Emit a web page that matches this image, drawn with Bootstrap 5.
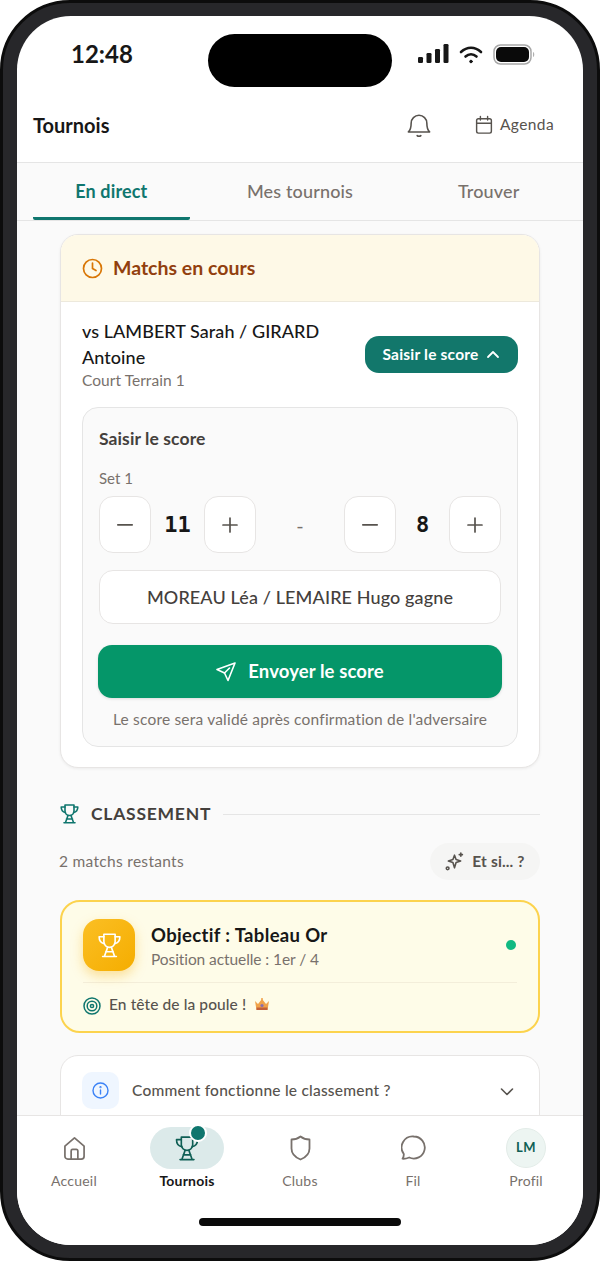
<!DOCTYPE html>
<html lang="fr">
<head>
<meta charset="utf-8">
<title>Tournois</title>
<link href="https://cdn.jsdelivr.net/npm/bootstrap@5.3.0/dist/css/bootstrap.min.css" rel="stylesheet">
<style>
html,body{margin:0;height:1261px;background:#fff;overflow:hidden}
body{font-family:Lato,"Liberation Sans",sans-serif;color:#171717}
svg{display:block;flex:none}
.phone{width:600px;height:1261px;border-radius:70px;background:#27272a;border:3px solid #0c0c0c;padding:13px 14px;position:relative}
.screen{height:100%;border-radius:54px;background:#fff;overflow:hidden;position:relative}
.island{position:absolute;left:191px;top:18px;width:184px;height:53px;border-radius:27px;background:#000}
.statusbar{height:84px;padding:0 47px 8px 54px}
.clock{font-size:24px;font-weight:700;color:#171717;line-height:1}
.topbar{height:63px;padding:0 29px 13px 16px;border-bottom:1px solid #e5e5e5}
.topbar-title{font-size:20px;font-weight:700}
.agenda{font-size:15.5px;color:#57534e;gap:7px;margin-left:44px;letter-spacing:.4px}
.tabbar{height:58px;padding:0 16px;gap:32px;background:#fafafa;border-bottom:1px solid #e5e5e5}
.tabitem{flex:1 1 0;text-align:center;font-size:18px;font-weight:500;color:#78716c;height:57px;line-height:57px;letter-spacing:.15px;border-bottom:3px solid transparent}
.tabitem.on{color:#0f766e;font-weight:700;border-color:#0f766e;border-radius:0 0 2px 2px}
.scrollarea{height:894px;background:#fafafa;padding:13px 43px 0;overflow:hidden}
.matchcard{border:1px solid #e7e5e4;border-radius:18px;background:#fff;box-shadow:0 1px 3px rgba(0,0,0,.06);overflow:hidden;height:534px}
.matchhead{height:67px;background:#fef9e7;border-bottom:1px solid #ede9dc;padding:0 21px;gap:10px;font-size:19.5px;font-weight:700;color:#92400e}
.matchbody{padding:16px 21px 0}
.vsline{width:270px;font-size:18px;line-height:26px;font-weight:500;color:#171717;letter-spacing:.05px}
.courtline{font-size:15.5px;line-height:21px;color:#78716c;letter-spacing:.05px}
.togglebtn{background:#12776b;color:#fff;width:153px;height:37px;border-radius:14px;font-size:15.5px;font-weight:700;padding:0;gap:8px;border:0;letter-spacing:.2px}
.togglebtn:hover{background:#12776b;color:#fff}
.scorebox{margin-top:16px;height:340px;border:1px solid #e5e5e5;border-radius:16px;background:#fafafa;padding:0 16px}
.scoretitle{font-size:17.5px;font-weight:700;color:#44403c;line-height:22px;padding-top:20px;letter-spacing:.1px}
.setlabel{font-size:15px;color:#78716c;line-height:20px;margin-top:18px}
.steprow{margin-top:8px;height:57px}
.stepbtn{width:52px;height:57px;background:#fff;border:1px solid #e7e5e4;border-radius:14px;padding:0;color:#57534e}
.stepval{width:53px;text-align:center;font-family:"DejaVu Sans Mono","Liberation Mono",monospace;font-weight:700;font-size:22px;color:#171717}
.dashsep{width:88px;text-align:center;font-size:20px;color:#78716c}
.winnerbtn{margin-top:17px;height:54px;background:#fff;border:1px solid #e7e5e4;border-radius:14px;font-size:18px;font-weight:500;color:#44403c;letter-spacing:.12px}
.sendbtn{margin-top:21px;margin-left:-1px;height:53px;background:#059669;color:#fff;border:0;border-radius:14px;font-size:18.5px;font-weight:700;gap:12px;box-shadow:0 1px 3px rgba(0,0,0,.12);letter-spacing:.1px;width:calc(100% + 2px)}
.sendbtn:hover{background:#059669;color:#fff}
.hint{text-align:center;font-size:15.5px;color:#78716c;margin-top:11px;line-height:20px;letter-spacing:.2px;white-space:nowrap}
.sectionhead{margin-top:34px;height:24px;gap:12px}
.sectionname{font-size:17.5px;font-weight:700;letter-spacing:.75px;color:#44403c}
.sectionrule{flex:1;height:1px;background:#e5e5e5}
.remainrow{margin-top:17px;height:37px}
.remaining{font-size:15.5px;color:#78716c;letter-spacing:.3px;margin-left:-1px}
.whatif{width:110px;height:37px;border-radius:19px;background:#f5f5f4;gap:8px;font-size:15.5px;font-weight:700;color:#57534e;padding:0;letter-spacing:.15px}
.goldcard{margin-top:20px;height:133px;border:2px solid #fcd34d;border-radius:20px;background:#fefce8;padding:17px 21px 0}
.goldicon{width:52px;height:52px;border-radius:16px;background:linear-gradient(135deg,#fbbf24,#f5ad00);box-shadow:0 5px 12px rgba(245,173,0,.35);margin-right:16px}
.goaltext{margin-top:3px}
.goaltitle{font-size:18.5px;font-weight:700;color:#171717;line-height:24px;letter-spacing:.35px}
.goalsub{font-size:15.5px;color:#78716c;line-height:24px;letter-spacing:-.08px}
.livedot{width:10px;height:10px;border-radius:50%;background:#10b981;margin:0 1px 0 auto}
.goldfoot{margin-top:11px;border-top:1px solid #f3eeda;padding-top:10px;gap:8px;font-size:15.5px;font-weight:500;color:#57534e;letter-spacing:.1px;height:44px}
.infocard{margin-top:22px;height:80px;border:1px solid #e7e5e4;border-radius:18px;background:#fff;padding:16px 25px 16px 21px}
.infoicon{width:37px;height:37px;border-radius:10px;background:#eff6ff;margin-right:13px}
.infotext{font-size:15.5px;font-weight:500;color:#57534e;letter-spacing:.22px;line-height:37px}
.bottomnav{height:130px;background:#fff;border-top:1px solid #e7e5e4;padding-top:11px;position:relative}
.navcell{width:113px;font-size:14px;color:#78716c;letter-spacing:.2px}
.navcell.on{color:#171717;font-weight:700}
.navslot{height:42px;width:74px;margin-bottom:1px;border-radius:21px;position:relative}
.navcell.on .navslot{background:#dceaea}
.badgedot{position:absolute;right:17px;top:-3px;width:18px;height:18px;border-radius:50%;background:#0f766e;border:2px solid #fff}
.avatar{width:40px;height:40px;border-radius:50%;background:#edf5f2;color:#0f5f55;font-weight:700;font-size:13px;border:1px solid #e3ece8;letter-spacing:.6px}
.homebar{position:absolute;left:182px;bottom:19px;width:202px;height:8px;border-radius:4px;background:#0a0a0a}
</style>
</head>
<body>
<div class="phone">
 <div class="screen d-flex flex-column">
  <div class="statusbar d-flex align-items-center justify-content-between">
   <div class="clock">12:48</div>
   <div class="d-flex align-items-center" style="gap:10px">
    <svg width="31" height="20" viewBox="0 0 31 20"><g fill="#171717"><rect x="0" y="13" width="5" height="6" rx="1.300"/><rect x="8.500" y="9" width="5" height="10" rx="1.300"/><rect x="17" y="5" width="5" height="14" rx="1.300"/><rect x="25.500" y="0" width="5" height="19" rx="1.300"/></g></svg>
    <svg width="24" height="19" viewBox="0 0 24 19" fill="none" stroke="#171717" stroke-width="2.600" stroke-linecap="round"><path d="M2 7c6-5.600 14-5.600 20 0"/><path d="M6.500 11.500c3.300-2.900 7.700-2.900 11 0"/><circle cx="12" cy="16.500" r="1.300" fill="#171717" stroke-width="1"/></svg>
    <svg width="43" height="21" viewBox="0 0 43 21" fill="none"><rect x="1" y="1" width="37" height="19" rx="6.500" stroke="#a8a8a8" stroke-width="1.500"/><rect x="3" y="3" width="33" height="15" rx="5" fill="#0a0a0a"/><path d="M40 8c1.700.4 1.700 4.600 0 5z" fill="#b0b0b0"/></svg>
   </div>
  </div>
  <div class="topbar d-flex align-items-center">
   <div class="topbar-title me-auto">Tournois</div>
   <svg width="24" height="26" viewBox="0 0 26 28" fill="none" stroke="#57534e" stroke-width="1.700" stroke-linecap="round" stroke-linejoin="round"><path d="M4.500 12a8.500 8.500 0 0 1 17 0c0 6 1.200 7.800 3 9.500H1.500c1.800-1.700 3-3.500 3-9.500Z"/><path d="M11 25.500c1 1 3 1 4 0"/></svg>
   <div class="agenda d-flex align-items-center">
    <svg width="18" height="20" viewBox="0 0 20 21" fill="none" stroke="#57534e" stroke-width="1.600" stroke-linecap="round" stroke-linejoin="round"><rect x="1.800" y="3.500" width="16.400" height="16" rx="2"/><path d="M6 1v4M14 1v4M1.800 8.500h16.400"/></svg>
    <span>Agenda</span>
   </div>
  </div>
  <div class="tabbar d-flex">
   <div class="tabitem on">En direct</div>
   <div class="tabitem">Mes tournois</div>
   <div class="tabitem">Trouver</div>
  </div>
  <div class="scrollarea">
   <div class="matchcard">
    <div class="matchhead d-flex align-items-center">
     <svg width="21" height="21" viewBox="0 0 21 21" fill="none" stroke="#d97706" stroke-width="1.700" stroke-linecap="round" stroke-linejoin="round"><circle cx="10.500" cy="10.500" r="9"/><path d="M10.500 5v5.500l3.500 2"/></svg>
     <span>Matchs en cours</span>
    </div>
    <div class="matchbody">
     <div class="d-flex align-items-center justify-content-between">
      <div>
       <div class="vsline">vs LAMBERT Sarah / GIRARD Antoine</div>
       <div class="courtline">Court Terrain 1</div>
      </div>
      <button class="btn togglebtn d-flex align-items-center justify-content-center" type="button">Saisir le score
       <svg width="14" height="9" viewBox="0 0 14 9" fill="none" stroke="#fff" stroke-width="1.800" stroke-linecap="round" stroke-linejoin="round"><path d="M2 7l5-5 5 5"/></svg>
      </button>
     </div>
     <div class="scorebox">
      <div class="scoretitle">Saisir le score</div>
      <div class="setlabel">Set 1</div>
      <div class="steprow d-flex align-items-center">
       <button class="btn stepbtn d-flex align-items-center justify-content-center" type="button"><svg width="16" height="2" viewBox="0 0 16 2"><rect width="16" height="1.700" rx=".8" fill="#57534e"/></svg></button>
       <div class="stepval">11</div>
       <button class="btn stepbtn d-flex align-items-center justify-content-center" type="button"><svg width="16" height="16" viewBox="0 0 16 16" fill="none" stroke="#57534e" stroke-width="1.700" stroke-linecap="round"><path d="M1 8h14M8 1v14"/></svg></button>
       <div class="dashsep">-</div>
       <button class="btn stepbtn d-flex align-items-center justify-content-center" type="button"><svg width="16" height="2" viewBox="0 0 16 2"><rect width="16" height="1.700" rx=".8" fill="#57534e"/></svg></button>
       <div class="stepval">8</div>
       <button class="btn stepbtn d-flex align-items-center justify-content-center" type="button"><svg width="16" height="16" viewBox="0 0 16 16" fill="none" stroke="#57534e" stroke-width="1.700" stroke-linecap="round"><path d="M1 8h14M8 1v14"/></svg></button>
      </div>
      <div class="winnerbtn d-flex align-items-center justify-content-center">MOREAU Léa / LEMAIRE Hugo gagne</div>
      <button class="btn sendbtn d-flex align-items-center justify-content-center" type="button">
       <svg width="20" height="20" viewBox="0 0 20 20" fill="none" stroke="#fff" stroke-width="1.600" stroke-linecap="round" stroke-linejoin="round"><path d="M19 1 1 7.500l7.500 3.500 3.500 7.500L19 1Z"/><path d="M8.500 11 13.500 6"/></svg>
       Envoyer le score
      </button>
      <div class="hint">Le score sera validé après confirmation de l'adversaire</div>
     </div>
    </div>
   </div>

   <div class="sectionhead d-flex align-items-center">
    <svg width="19" height="20" viewBox="0 0 19 20" fill="none" stroke="#0f766e" stroke-width="1.600" stroke-linecap="round" stroke-linejoin="round"><path d="M5 1h9v6a4.500 4.500 0 0 1-9 0V1Z"/><path d="M5 3H1.200c0 3.500 1.500 5 4.200 5.500M14 3h3.800c0 3.500-1.500 5-4.200 5.500"/><path d="M8 11.500 5.500 18.500M11 11.500l2.500 7M4 18.800h11M6.500 15h6"/></svg>
    <div class="sectionname">CLASSEMENT</div>
    <div class="sectionrule"></div>
   </div>
   <div class="remainrow d-flex align-items-center justify-content-between">
    <div class="remaining">2 matchs restants</div>
    <div class="whatif d-flex align-items-center justify-content-center">
     <svg width="19" height="19" viewBox="0 0 18 18" fill="none" stroke="#57534e" stroke-width="1.500" stroke-linecap="round" stroke-linejoin="round"><path d="M9 3l1.500 4.200 4.300 1.300-4.300 1.500L9 15l-1.500-5-4.300-1.500 4.300-1.300L9 3Z"/><path d="M15 1v3M13.500 2.500h3"/><circle cx="2.500" cy="15.500" r="1.300"/></svg>
     <span>Et si... ?</span>
    </div>
   </div>
   <div class="goldcard">
    <div class="d-flex align-items-center">
     <div class="goldicon d-flex align-items-center justify-content-center">
      <svg width="25" height="25" viewBox="0 0 19 20" fill="none" stroke="#fff" stroke-width="1.300" stroke-linecap="round" stroke-linejoin="round"><path d="M5 1h9v6a4.500 4.500 0 0 1-9 0V1Z"/><path d="M5 3H1.200c0 3.500 1.500 5 4.200 5.500M14 3h3.800c0 3.500-1.500 5-4.200 5.500"/><path d="M8 11.500 5.500 18.500M11 11.500l2.500 7M4 18.800h11M6.500 15h6"/></svg>
     </div>
     <div class="goaltext">
      <div class="goaltitle">Objectif : Tableau Or</div>
      <div class="goalsub">Position actuelle : 1er / 4</div>
     </div>
     <div class="livedot"></div>
    </div>
    <div class="goldfoot d-flex align-items-start">
     <svg class="mt-1" width="18" height="18" viewBox="0 0 18 18" fill="none" stroke="#0f766e" stroke-width="1.500"><circle cx="9" cy="9" r="8"/><circle cx="9" cy="9" r="4.800"/><circle cx="9" cy="9" r="1.600"/></svg>
     <span>En tête de la poule !</span>
     <svg class="mt-1" width="16" height="15" viewBox="0 0 16 15"><path d="M1 4l3 3 4-5 4 5 3-3-1.500 9h-11Z" fill="#f0a24a"/><path d="M2.500 10.500h11V13h-11Z" fill="#c2603a"/><circle cx="8" cy="8.500" r="1.600" fill="#8a6fb0"/><circle cx="8" cy="2" r="1" fill="#f0a24a"/></svg>
    </div>
   </div>
   <div class="infocard d-flex align-items-start">
    <div class="infoicon d-flex align-items-center justify-content-center">
     <svg width="17" height="17" viewBox="0 0 17 17" fill="none" stroke="#3b82f6" stroke-width="1.400" stroke-linecap="round"><circle cx="8.500" cy="8.500" r="7.500"/><path d="M8.500 8v4"/><circle cx="8.500" cy="5.200" r=".4"/></svg>
    </div>
    <div class="infotext me-auto">Comment fonctionne le classement ?</div>
    <svg class="mt-3" width="14" height="8" viewBox="0 0 14 8" fill="none" stroke="#57534e" stroke-width="1.600" stroke-linecap="round" stroke-linejoin="round"><path d="M1.500 1 7 6.500 12.500 1"/></svg>
   </div>
  </div>
  <div class="bottomnav d-flex justify-content-center">
   <div class="navcell d-flex flex-column align-items-center">
    <div class="navslot d-flex align-items-center justify-content-center">
     <svg width="23" height="25" viewBox="0 0 24 26" fill="none" stroke="#78716c" stroke-width="1.800" stroke-linecap="round" stroke-linejoin="round"><path d="M2 10.500 12 2l10 8.500V21a3 3 0 0 1-3 3H5a3 3 0 0 1-3-3V10.500Z"/><path d="M8.500 24v-8.500a1.500 1.500 0 0 1 1.500-1.500h4a1.500 1.500 0 0 1 1.500 1.500V24"/></svg>
    </div>
    <span>Accueil</span>
   </div>
   <div class="navcell on d-flex flex-column align-items-center">
    <div class="navslot d-flex align-items-center justify-content-center">
     <svg width="24" height="27" viewBox="0 0 19 20" fill="none" stroke="#0f5f55" stroke-width="1.300" stroke-linecap="round" stroke-linejoin="round"><path d="M5 1h9v6a4.500 4.500 0 0 1-9 0V1Z"/><path d="M5 3H1.200c0 3.500 1.500 5 4.200 5.500M14 3h3.800c0 3.500-1.500 5-4.200 5.500"/><path d="M8 11.500 5.500 18.500M11 11.500l2.500 7M4 18.800h11M6.500 15h6"/></svg>
     <div class="badgedot"></div>
    </div>
    <span>Tournois</span>
   </div>
   <div class="navcell d-flex flex-column align-items-center">
    <div class="navslot d-flex align-items-center justify-content-center">
     <svg width="21" height="26" viewBox="0 0 21 26" fill="none" stroke="#78716c" stroke-width="1.800" stroke-linejoin="round"><path d="M10.500 1.500C8 3.500 5 4.500 1.500 4.500v9c0 5.500 4 9 9 11 5-2 9-5.500 9-11v-9c-3.500 0-6.500-1-9-3Z"/></svg>
    </div>
    <span>Clubs</span>
   </div>
   <div class="navcell d-flex flex-column align-items-center">
    <div class="navslot d-flex align-items-center justify-content-center">
     <svg width="25" height="26" viewBox="0 0 25 26" fill="none" stroke="#78716c" stroke-width="1.800" stroke-linecap="round" stroke-linejoin="round"><path d="M12.800 1.500a11 11 0 1 1-4.600 21c-2 .8-4.500 1.500-6.700 1.200.9-1.200 1.400-3 1.300-4.700A11 11 0 0 1 12.800 1.500Z"/></svg>
    </div>
    <span>Fil</span>
   </div>
   <div class="navcell d-flex flex-column align-items-center">
    <div class="navslot d-flex align-items-center justify-content-center">
     <div class="avatar d-flex align-items-center justify-content-center">LM</div>
    </div>
    <span>Profil</span>
   </div>
   <div class="homebar"></div>
  </div>
  <div class="island"></div>
 </div>
</div>
<script src="https://cdn.jsdelivr.net/npm/bootstrap@5.3.0/dist/js/bootstrap.bundle.min.js"></script>
</body>
</html>
